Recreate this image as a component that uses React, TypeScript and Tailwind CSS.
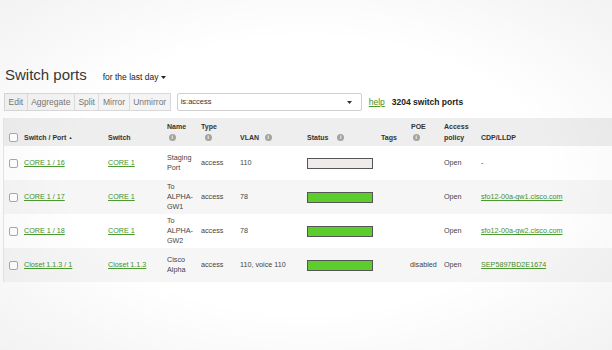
import React from "react";

const COLS = "grid grid-cols-[20px_84px_59px_34px_39px_67px_74px_30px_33px_37px_1fr]";

function Info() {
  return (
    <span className="inline-flex h-[6.5px] w-[6.5px] items-center justify-center rounded-full bg-[#a3a3a3] text-[5px] font-bold leading-none text-white">
      i
    </span>
  );
}

function Check() {
  return <span className="block h-[9px] w-[9px] rounded-[2px] border border-[#a8a8a8] bg-white" />;
}

function Lnk({ children }: { children: React.ReactNode }) {
  return (
    <span className="text-[#3f8f2a] underline decoration-[#4c9a30] underline-offset-[1px]">{children}</span>
  );
}

function Bar({ on }: { on: boolean }) {
  return (
    <span
      className={
        "block h-[11px] w-[66px] border-[1.5px] border-[#555555] " + (on ? "bg-[#5dcd2e]" : "bg-[#efebeb]")
      }
    />
  );
}

type Row = {
  port: string;
  sw: string;
  name: string[];
  vlan: string;
  on: boolean;
  poe: string;
  cdp: string;
  cdpLink: boolean;
  gray: boolean;
};

const rows: Row[] = [
  { port: "CORE 1 / 16", sw: "CORE 1", name: ["Staging", "Port"], vlan: "110", on: false, poe: "", cdp: "-", cdpLink: false, gray: false },
  { port: "CORE 1 / 17", sw: "CORE 1", name: ["To", "ALPHA-", "GW1"], vlan: "78", on: true, poe: "", cdp: "sfo12-00a-gw1.cisco.com", cdpLink: true, gray: true },
  { port: "CORE 1 / 18", sw: "CORE 1", name: ["To", "ALPHA-", "GW2"], vlan: "78", on: true, poe: "", cdp: "sfo12-00a-gw2.cisco.com", cdpLink: true, gray: false },
  { port: "Closet 1.1.3 / 1", sw: "Closet 1.1.3", name: ["Cisco", "Alpha"], vlan: "110, voice 110", on: true, poe: "disabled", cdp: "SEP5897BD2E1674", cdpLink: true, gray: true },
];

export default function App() {
  return (
    <div className="relative h-[350px] w-[612px] overflow-hidden bg-white font-['Liberation_Sans',Arial,sans-serif] text-[#333]">
      <div className="pt-[66px]">
        <div className="flex items-baseline pl-[5px]">
          <span className="text-[15px] leading-[18px] text-[#383838]">Switch ports</span>
          <span className="ml-[16px] flex items-center text-[8.5px] text-[#222]">
            for the last day
            <svg width="5" height="3" viewBox="0 0 5 3" className="ml-[3px]">
              <path d="M0 0H5L2.5 3Z" fill="#222" />
            </svg>
          </span>
        </div>

        <div className="mt-[9px] flex h-[18px] items-stretch pl-[4px]">
          <div className="flex border border-[#d9d9d9] bg-[#f4f4f4] text-[8.5px] text-[#777]">
            {["Edit", "Aggregate", "Split", "Mirror", "Unmirror"].map((b, i) => (
              <span
                key={b}
                className={"flex items-center px-[3.5px] " + (i > 0 ? "border-l border-[#dcdcdc]" : "")}
              >
                {b}
              </span>
            ))}
          </div>
          <div className="ml-[6px] flex w-[185px] items-center justify-between rounded-[2px] border border-[#d0d0d0] bg-white pl-[3px] pr-[9px] text-[7.5px] text-[#333]">
            <span>is:access</span>
            <svg width="5" height="3" viewBox="0 0 5 3">
              <path d="M0 0H5L2.5 3Z" fill="#333" />
            </svg>
          </div>
          <div className="ml-[7px] flex items-center text-[8.5px]">
            <Lnk>help</Lnk>
            <span className="ml-[7px] font-bold text-[#222]">3204 switch ports</span>
          </div>
        </div>

        <div className="ml-[3px] mt-[7px] border-l border-[#e6e6e6]">
          <div className={COLS + " h-[28px] bg-[#eeeeee] pb-[3px] text-[7px] font-bold leading-[11px] text-[#333]"}>
            <div className="flex items-end pb-[1px] pl-[5px]"><Check /></div>
            <div className="flex items-end">
              Switch / Port<span className="mb-[3px] ml-[2px] text-[4px] leading-none">▲</span>
            </div>
            <div className="flex items-end">Switch</div>
            <div className="flex flex-col justify-end">
              <span>Name</span>
              <span className="flex h-[11px] items-center pl-[2px]"><Info /></span>
            </div>
            <div className="flex flex-col justify-end">
              <span>Type</span>
              <span className="flex h-[11px] items-center pl-[4px]"><Info /></span>
            </div>
            <div className="flex items-end">
              <span>VLAN</span>
              <span className="ml-[6px] flex h-[11px] items-center"><Info /></span>
            </div>
            <div className="flex items-end">
              <span>Status</span>
              <span className="ml-[9px] flex h-[11px] items-center"><Info /></span>
            </div>
            <div className="flex items-end">Tags</div>
            <div className="flex flex-col justify-end">
              <span>POE</span>
              <span className="flex h-[11px] items-center pl-[2px]"><Info /></span>
            </div>
            <div className="flex flex-col justify-end">
              <span>Access</span>
              <span>policy</span>
            </div>
            <div className="flex items-end">CDP/LLDP</div>
          </div>

          {rows.map((r) => (
            <div
              key={r.port}
              className={COLS + " h-[34px] items-center text-[7.2px] leading-[10px] text-[#444] " + (r.gray ? "bg-[#f6f6f6]" : "bg-white")}
            >
              <div className="pl-[5px]"><Check /></div>
              <div><Lnk>{r.port}</Lnk></div>
              <div><Lnk>{r.sw}</Lnk></div>
              <div className="flex flex-col">
                {r.name.map((n) => (
                  <span key={n}>{n}</span>
                ))}
              </div>
              <div>access</div>
              <div>{r.vlan}</div>
              <div><Bar on={r.on} /></div>
              <div></div>
              <div className="-ml-[1px]">{r.poe}</div>
              <div>Open</div>
              <div>{r.cdpLink ? <Lnk>{r.cdp}</Lnk> : r.cdp}</div>
            </div>
          ))}
        </div>
      </div>
      <div className="pointer-events-none absolute inset-0 bg-[radial-gradient(ellipse_at_center,rgba(0,0,0,0)_55%,rgba(0,0,0,0.05)_100%)]" />
    </div>
  );
}
